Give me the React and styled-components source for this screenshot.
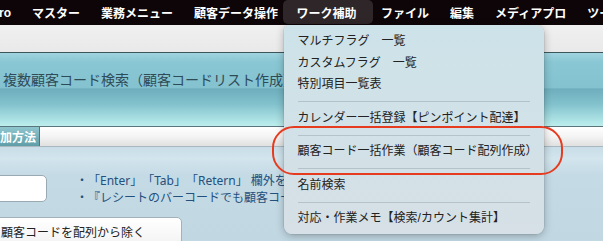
import React from 'react';
import styled, { createGlobalStyle } from 'styled-components';

const GlobalStyle = createGlobalStyle`
  html, body {
    margin: 0;
    padding: 0;
    width: 603px;
    height: 241px;
    overflow: hidden;
    background: #c3d9e4;
  }
  * {
    box-sizing: border-box;
  }
`;

const JP = `"Liberation Sans", "Noto Sans CJK JP", sans-serif`;

const Page = styled.div`
  position: relative;
  width: 603px;
  height: 241px;
  overflow: hidden;
  font-family: ${JP};
  text-spacing-trim: space-all;
`;

const MenuBar = styled.nav`
  display: flex;
  align-items: stretch;
  height: 25px;
  background: #0d0507;
  white-space: nowrap;
  position: relative;
  z-index: 5;
`;

const MenuItem = styled.div`
  position: relative;
  display: flex;
  align-items: center;
  padding: 0 10.5px;
  color: #fff;
  font-size: 12px;
  font-weight: bold;
  background: ${p => (p.$active ? '#2e2628' : 'transparent')};
  border-radius: ${p => (p.$active ? '5px' : '0')};
  ${p => p.$active && 'padding: 0 16px 0 14px; margin: 0 -2px 0 -6px; height: 24px;'}
  ${p => p.$first && 'padding-left: 0; margin-left: -1px;'}
`;

const Dropdown = styled.div`
  position: absolute;
  top: 25px;
  left: 1px;
  width: 260px;
  padding: 6px 0 4px;
  background: linear-gradient(to bottom, #cde3e9 0%, #d2e1e7 60%, #d6e0e6 100%);
  border-radius: 5px 8px 8px 8px;
  box-shadow: 0 2px 8px rgba(0, 0, 0, 0.28), 0 0 0 0.5px rgba(0, 0, 0, 0.12);
  font-weight: normal;
  z-index: 6;
`;

const DropItem = styled.div`
  height: 21.5px;
  line-height: 21.5px;
  padding-left: 14px;
  font-size: 12px;
  color: #222;
`;

const Separator = styled.div`
  height: 1px;
  margin: 5.5px 14px;
  background: #b3c3c9;
`;

const SubBar = styled.div`
  height: 28px;
  background: linear-gradient(to bottom, #f0f0f0, #e9e9e9);
  border-bottom: 1px solid #3d565c;
`;

const Header = styled.header`
  height: 74px;
  padding: 19px 0 0 3px;
  background: linear-gradient(
    to bottom,
    #a0d4df 0%,
    #8ac7d4 12%,
    #84c2cf 48%,
    #6eaebd 49%,
    #82c2cd 70%,
    #bdeeed 100%
  );
  border-bottom: 1px solid #5a767c;
`;

const Title = styled.h1`
  margin: 0;
  font-size: 14px;
  font-weight: normal;
  line-height: 16px;
  color: #2e4b58;
  white-space: nowrap;
`;

const TabRow = styled.div`
  display: flex;
  height: 20px;
  border-bottom: 1px solid #a9b9bf;
`;

const Tab = styled.div`
  width: 40px;
  display: flex;
  align-items: center;
  font-size: 12px;
  font-weight: bold;
  color: #fff;
  background: linear-gradient(to bottom, #8fc6ce, #5f9ea9);
  border-right: 1px solid #49787e;
  white-space: nowrap;
  overflow: hidden;
`;

const TabFill = styled.div`
  flex: 1;
  background: linear-gradient(to bottom, #ffffff, #f4f4f4 50%, #e0e0e0);
`;

const Body = styled.main`
  padding-top: 24.5px;
  height: 94px;
  background: linear-gradient(to bottom, #c8dde8 0%, #d3e5ed 12%, #c4dae5 30%, #c1d8e3 100%);
`;

const InputRow = styled.div`
  display: flex;
  align-items: center;
  gap: 29px;
`;

const CodeInput = styled.input`
  width: 77px;
  height: 27px;
  margin-left: -30px;
  border: 1px solid #9aaab2;
  border-radius: 5px;
  background: #fff;
  outline: none;
`;

const Notes = styled.div`
  display: flex;
  flex-direction: column;
  white-space: nowrap;
`;

const Note = styled.div`
  font-family: "Noto Sans", "Noto Sans CJK JP", sans-serif;
  font-size: 12px;
  line-height: 17px;
  color: #23507c;
`;

const RemoveButton = styled.button`
  display: block;
  margin: 11.5px 0 0 -12px;
  width: 194px;
  height: 28px;
  padding: 0 0 0 12px;
  text-align: left;
  font-family: ${JP};
  font-size: 12px;
  color: #222;
  background: linear-gradient(to bottom, #ffffff, #f3f3f3);
  border: 1px solid #a3b2b9;
  border-radius: 5px;
`;

const Highlight = styled.div`
  position: absolute;
  left: 272px;
  top: 126px;
  width: 291px;
  height: 49px;
  border: 2.5px solid #e63b1f;
  border-radius: 22px;
  z-index: 7;
  pointer-events: none;
`;

const menus = ['マスター', '業務メニュー', '顧客データ操作'];
const menusAfter = ['ファイル', '編集', 'メディアプロ', 'ツール'];

const dropGroups = [
  ['マルチフラグ　一覧', 'カスタムフラグ　一覧', '特別項目一覧表'],
  ['カレンダー一括登録【ピンポイント配達】'],
  ['顧客コード一括作業（顧客コード配列作成）'],
  ['名前検索'],
  ['対応・作業メモ【検索/カウント集計】'],
];

export default function App() {
  return (
    <Page>
      <GlobalStyle />
      <MenuBar>
        <MenuItem $first>ro</MenuItem>
        {menus.map(m => (
          <MenuItem key={m}>{m}</MenuItem>
        ))}
        <MenuItem $active>
          ワーク補助
          <Dropdown>
            {dropGroups.map((group, i) => (
              <React.Fragment key={i}>
                {i > 0 && <Separator />}
                {group.map(item => (
                  <DropItem key={item}>{item}</DropItem>
                ))}
              </React.Fragment>
            ))}
          </Dropdown>
        </MenuItem>
        {menusAfter.map(m => (
          <MenuItem key={m}>{m}</MenuItem>
        ))}
      </MenuBar>
      <SubBar />
      <Header>
        <Title>複数顧客コード検索（顧客コードリスト作成）</Title>
      </Header>
      <TabRow>
        <Tab>加方法</Tab>
        <TabFill />
      </TabRow>
      <Body>
        <InputRow>
          <CodeInput />
          <Notes>
            <Note>・「Enter」「Tab」「Retern」 欄外をクリックで追加</Note>
            <Note>・『レシートのバーコードでも顧客コード入力可能』</Note>
          </Notes>
        </InputRow>
        <RemoveButton>顧客コードを配列から除く</RemoveButton>
      </Body>
      <Highlight />
    </Page>
  );
}
